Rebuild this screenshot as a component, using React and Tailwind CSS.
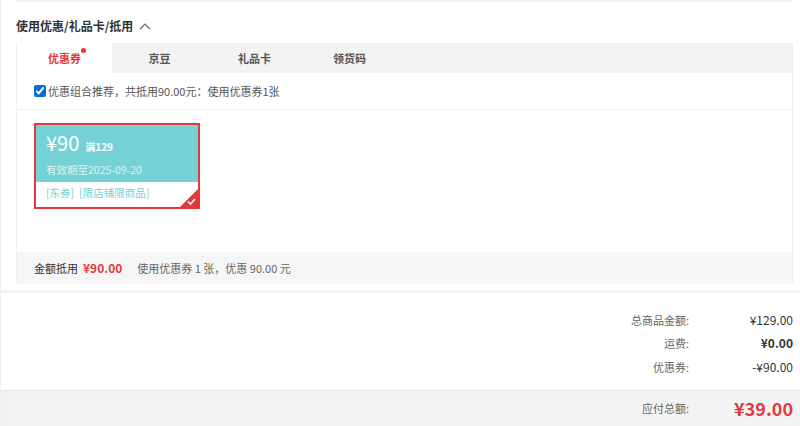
const font = { fontFamily: '"Noto Sans CJK SC", "Noto Sans", sans-serif' }

function Tabs() {
  const tabs = ['优惠券', '京豆', '礼品卡', '领货码']
  return (
    <div className="flex h-[30px] bg-[#f3f3f3]">
      {tabs.map((t, i) => (
        <div
          key={t}
          className={
            i === 0
              ? 'flex w-[95px] items-center justify-center bg-white text-[11px] font-bold text-[#e4393c]'
              : 'flex w-[95px] items-center justify-center text-[11px] font-bold text-[#555]'
          }
        >
          <span className="relative">
            {t}
            {i === 0 && (
              <span className="absolute -right-[5px] -top-[2px] h-[5px] w-[5px] rounded-full bg-[#e4393c]" />
            )}
          </span>
        </div>
      ))}
    </div>
  )
}

function Coupon() {
  return (
    <div className="relative h-[86px] w-[166px] border-2 border-[#e4393c] bg-white">
      <div className="h-[57px] bg-[#74d2d4] px-[10px] pt-[6px] text-white">
        <div className="flex items-baseline gap-[6px] leading-[24px]">
          <span className="text-[20px]">¥90</span>
          <span className="text-[10px] font-bold">满129</span>
        </div>
        <div className="mt-[3px] text-[10.5px] leading-[16px] text-white/75">有效期至2025-09-20</div>
      </div>
      <div className="flex gap-[5px] px-[10px] pt-[3px] text-[10.5px] leading-[16px] text-[#74d2d4]">
        <span>[东券]</span>
        <span>[限店铺限商品]</span>
      </div>
      <svg className="absolute bottom-0 right-0" width="18" height="18" viewBox="0 0 18 18">
        <polygon points="18,0 18,18 0,18" fill="#e4393c" />
        <path d="M8 12.5 L10.5 15 L15 10" stroke="#fff" strokeWidth="1.6" fill="none" />
      </svg>
    </div>
  )
}

function TotalRow({ label, value, bold }) {
  return (
    <div className="flex h-[23.5px] items-center justify-end">
      <span className="text-[11px] text-[#666]">{label}</span>
      <span className={bold ? 'w-[104px] text-right text-[12px] font-bold text-[#333]' : 'w-[104px] text-right text-[12px] text-[#333]'}>
        {value}
      </span>
    </div>
  )
}

export default function App() {
  return (
    <div className="h-[426px] w-[800px] overflow-hidden border-l border-[#efefef] bg-white" style={font}>
      <div className="pl-[15px] pr-[7px]">
        <div className="h-[2px] bg-[#f3f3f3]" />
        <div className="flex h-[41px] items-center gap-[6px] pt-[6px] text-[12px] font-bold text-[#333]">
          使用优惠/礼品卡/抵用
          <svg width="12" height="8" viewBox="0 0 12 8">
            <path d="M1 7 L6 2 L11 7" stroke="#666" strokeWidth="1.2" fill="none" />
          </svg>
        </div>
        <div className="border-x border-[#f0f0f0]">
          <Tabs />
          <div className="flex h-[37px] items-center gap-[2px] border-b border-[#eee] pl-[17px] text-[11px] text-[#555]">
            <input type="checkbox" defaultChecked className="m-0 h-[12px] w-[12px] accent-[#0a6cd6]" />
            优惠组合推荐，共抵用90.00元：使用优惠券1张
          </div>
          <div className="h-[142px] pl-[17px] pt-[13px]">
            <Coupon />
          </div>
          <div className="flex h-[32px] items-center bg-[#f6f6f6] pl-[17px] text-[11px]">
            <span className="text-[#333]">金额抵用</span>
            <span className="ml-[5px] text-[12px] font-bold text-[#e4393c]">¥90.00</span>
            <span className="ml-[15px] text-[#666]">使用优惠券 1 张，优惠 90.00 元</span>
          </div>
        </div>
      </div>
      <div className="mt-[6px] h-[3px] bg-[#f3f3f3]" />
      <div className="pr-[7px] pt-[15px]">
        <TotalRow label="总商品金额:" value="¥129.00" />
        <TotalRow label="运费:" value="¥0.00" bold />
        <TotalRow label="优惠券:" value="-¥90.00" />
      </div>
      <div className="mt-[11px] flex h-[37px] items-center justify-end border-t border-[#e8e8e8] bg-[#f3f3f3] pr-[7px]">
        <span className="text-[11px] text-[#666]">应付总额:</span>
        <span className="w-[104px] text-right text-[18px] font-bold text-[#e4393c]">¥39.00</span>
      </div>
    </div>
  )
}
